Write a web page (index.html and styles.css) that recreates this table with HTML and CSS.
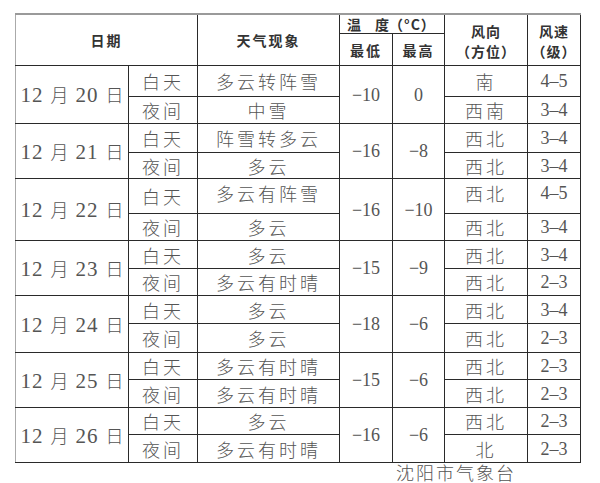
FILE: index.html
```html
<!DOCTYPE html>
<html lang="zh-CN">
<head>
<meta charset="utf-8">
<title>沈阳天气预报</title>
<link rel="stylesheet" href="styles.css">
</head>
<body>
<table class="wx">
  <colgroup>
    <col class="c-date"><col class="c-per"><col class="c-wx"><col class="c-lo"><col class="c-hi"><col class="c-dir"><col class="c-spd">
  </colgroup>
  <thead>
    <tr class="h1">
      <th colspan="2" rowspan="2">日期</th>
      <th rowspan="2">天气现象</th>
      <th colspan="2" class="temp">温　度<span class="cel">（°C）</span></th>
      <th rowspan="2" class="two">风向<br>（方位）</th>
      <th rowspan="2" class="two">风速<br>（级）</th>
    </tr>
    <tr class="h2">
      <th>最低</th>
      <th>最高</th>
    </tr>
  </thead>
  <tbody>
    <tr class="r31"><td rowspan="2" class="date"><span class="n">12</span> 月 <span class="n">20</span> 日</td><td>白天</td><td>多云转阵雪</td><td rowspan="2" class="n">−10</td><td rowspan="2" class="n">0</td><td>南</td><td class="n">4–5</td></tr>
    <tr class="r27"><td>夜间</td><td>中雪</td><td>西南</td><td class="n">3–4</td></tr>

    <tr class="r29"><td rowspan="2" class="date"><span class="n">12</span> 月 <span class="n">21</span> 日</td><td>白天</td><td>阵雪转多云</td><td rowspan="2" class="n">−16</td><td rowspan="2" class="n">−8</td><td>西北</td><td class="n">3–4</td></tr>
    <tr class="r26"><td>夜间</td><td>多云</td><td>西北</td><td class="n">3–4</td></tr>

    <tr class="r35"><td rowspan="2" class="date"><span class="n">12</span> 月 <span class="n">22</span> 日</td><td>白天</td><td class="up">多云有阵雪</td><td rowspan="2" class="n">−16</td><td rowspan="2" class="n">−10</td><td class="up">西北</td><td class="n up">4–5</td></tr>
    <tr class="r27"><td>夜间</td><td>多云</td><td>西北</td><td class="n">3–4</td></tr>

    <tr class="r28"><td rowspan="2" class="date"><span class="n">12</span> 月 <span class="n">23</span> 日</td><td>白天</td><td>多云</td><td rowspan="2" class="n">−15</td><td rowspan="2" class="n">−9</td><td>西北</td><td class="n">3–4</td></tr>
    <tr class="r27"><td>夜间</td><td>多云有时晴</td><td>西北</td><td class="n">2–3</td></tr>

    <tr class="r28"><td rowspan="2" class="date"><span class="n">12</span> 月 <span class="n">24</span> 日</td><td>白天</td><td>多云</td><td rowspan="2" class="n">−18</td><td rowspan="2" class="n">−6</td><td>西北</td><td class="n">3–4</td></tr>
    <tr class="r29"><td>夜间</td><td>多云</td><td>西北</td><td class="n">2–3</td></tr>

    <tr class="r27"><td rowspan="2" class="date"><span class="n">12</span> 月 <span class="n">25</span> 日</td><td>白天</td><td>多云有时晴</td><td rowspan="2" class="n">−15</td><td rowspan="2" class="n">−6</td><td>西北</td><td class="n">2–3</td></tr>
    <tr class="r28"><td>夜间</td><td>多云有时晴</td><td>西北</td><td class="n">2–3</td></tr>

    <tr class="r27"><td rowspan="2" class="date"><span class="n">12</span> 月 <span class="n">26</span> 日</td><td>白天</td><td>多云</td><td rowspan="2" class="n">−16</td><td rowspan="2" class="n">−6</td><td>西北</td><td class="n">2–3</td></tr>
    <tr class="r28"><td>夜间</td><td>多云有时晴</td><td>北</td><td class="n">2–3</td></tr>
  </tbody>
</table>
<div class="source">沈阳市气象台</div>
</body>
</html>
```

FILE: styles.css
```css
html, body {
  margin: 0;
  padding: 0;
  background: #fff;
}
body {
  font-family: "Noto Sans CJK SC", "Noto Sans", sans-serif;
  color: #555;
}
.wx {
  border-collapse: collapse;
  table-layout: fixed;
  width: 566px;
  margin: 13px 0 0 15px;
  border-top: 2px solid #9a9a9a;
  border-left: 1px solid #aaa;
}
.c-date { width: 113px; }
.c-per { width: 69px; }
.c-wx { width: 142px; }
.c-lo { width: 53px; }
.c-hi { width: 52px; }
.c-dir { width: 83px; }
.c-spd { width: 53px; }

.wx th, .wx td {
  border: 1px solid #2a2a2a;
  padding: 0;
  text-align: center;
  vertical-align: middle;
  overflow: hidden;
  white-space: nowrap;
}
.wx tr:first-child th { border-top: 2px solid #9a9a9a; }
.wx th:first-child, .wx td.date { border-left: 1px solid #aaa; }

.wx th {
  font-weight: 700;
  font-size: 14px;
  line-height: 18px;
  color: #333;
  letter-spacing: 2px;
}
.wx th.two {
  line-height: 20px;
  letter-spacing: 1px;
  padding-top: 2px;
}
.wx th.temp {
  letter-spacing: 0;
  text-align: left;
  padding-left: 7px;
  font-size: 14px;
}
.cel { letter-spacing: 1px; }
.h1 { height: 19px; }
.h2 { height: 32px; }

.wx td {
  font-size: 18px;
  font-weight: 300;
  line-height: 20px;
  letter-spacing: 3px;
  color: #555;
}
.wx td.up { vertical-align: top; padding-top: 4px; }
.wx td.date { letter-spacing: 0; font-size: 18px; word-spacing: 3px; }
.n {
  font-family: "Liberation Serif", "Times New Roman", serif;
  font-size: 21px;
  font-weight: 400;
  letter-spacing: 0;
}
.wx td.n { letter-spacing: 0; }
.date .n { font-size: 21px; letter-spacing: 1px; }

.r26 { height: 26px; }
.r27 { height: 27px; }
.r28 { height: 28px; }
.r29 { height: 29px; }
.r31 { height: 31px; }
.r35 { height: 35px; }

.source {
  padding-left: 396px;
  margin-top: 0;
  font-size: 18px;
  font-weight: 300;
  letter-spacing: 2px;
  line-height: 19px;
  color: #555;
}
```
